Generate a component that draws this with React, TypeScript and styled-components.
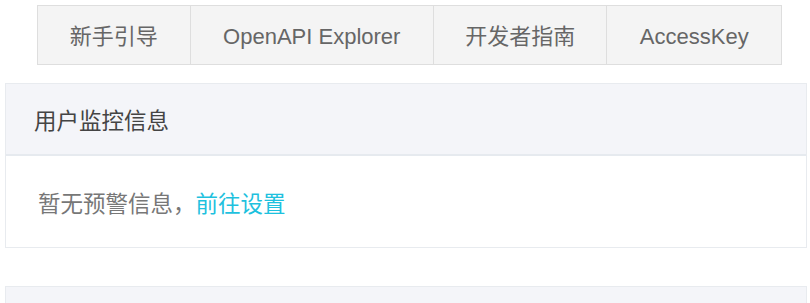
import { FC } from 'react';
import styled, { createGlobalStyle } from 'styled-components';

const GlobalStyle = createGlobalStyle`
  html, body {
    margin: 0;
    padding: 0;
    background: #fff;
    font-family: "Liberation Sans", "Noto Sans CJK SC", Arial, sans-serif;
  }
`;

const Page = styled.div`
  width: 810px;
  padding: 5px 3px 0 5px;
  box-sizing: border-box;
`;

const TabBar = styled.div`
  display: flex;
  margin-left: 32px;
  width: 745px;
  border: 1.5px solid #dedede;
  box-sizing: border-box;
  background: #f4f4f4;
`;

const Tab = styled.div<{ $width: number; $cjk?: boolean }>`
  width: ${({ $width }) => $width}px;
  height: 58px;
  padding: ${({ $cjk }) => ($cjk ? '0 0 3px' : '4px 0 0')};
  display: flex;
  align-items: center;
  justify-content: center;
  font-family: ${({ $cjk }) =>
    $cjk
      ? '"Noto Sans CJK SC", "Liberation Sans", sans-serif'
      : '"Liberation Sans", Arial, sans-serif'};
  font-size: 22px;
  color: #666;
  box-sizing: border-box;
  & + & {
    border-left: 1.5px solid #dedede;
  }
`;

const Panel = styled.section<{ $gap: number }>`
  margin-top: ${({ $gap }) => $gap}px;
  border: 1px solid #e8ebef;
  background: #fff;
`;

const PanelHeader = styled.div`
  height: 72px;
  display: flex;
  align-items: center;
  padding: 0 0 0 28px;
  box-sizing: border-box;
  background: #f4f5f9;
  border-bottom: 2px solid #e6eaef;
  font-family: "Noto Sans CJK SC", "Liberation Sans", sans-serif;
  font-size: 22.5px;
  color: #444;
`;

const PanelBody = styled.div`
  height: 91px;
  display: flex;
  align-items: center;
  padding-left: 32px;
  font-family: "Noto Sans CJK SC", "Liberation Sans", sans-serif;
  font-size: 22.5px;
  color: #777;
`;

const Link = styled.a`
  color: #1ec1de;
  text-decoration: none;
  cursor: pointer;
`;

const tabs = [
  { label: '新手引导', width: 152, cjk: true },
  { label: 'OpenAPI Explorer', width: 244, cjk: false },
  { label: '开发者指南', width: 174, cjk: true },
  { label: 'AccessKey', width: 175, cjk: false },
];

const App: FC = () => (
  <>
    <GlobalStyle />
    <Page>
      <TabBar>
        {tabs.map(({ label, width, cjk }) => (
          <Tab key={label} $width={width} $cjk={cjk}>
            {label}
          </Tab>
        ))}
      </TabBar>
      <Panel $gap={18}>
        <PanelHeader>用户监控信息</PanelHeader>
        <PanelBody>
          暂无预警信息，<Link>前往设置</Link>
        </PanelBody>
      </Panel>
      <Panel $gap={38}>
        <PanelHeader />
      </Panel>
    </Page>
  </>
);

export default App;
